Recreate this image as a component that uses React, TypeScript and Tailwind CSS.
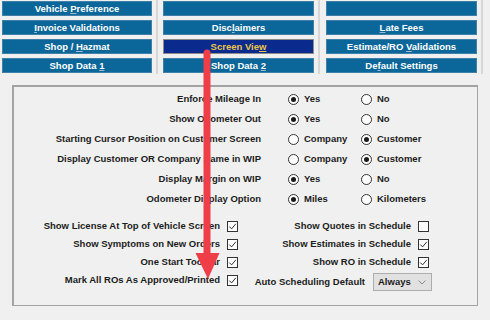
import type { ReactNode } from "react";

const U = ({ children, gold }: { children: ReactNode; gold?: boolean }) => (
  <span
    className={
      gold
        ? "underline decoration-[#e9c44a] underline-offset-[1px]"
        : "underline decoration-[#9dbdd6] underline-offset-[1px]"
    }
  >
    {children}
  </span>
);

function NavButton({ children, active }: { children?: ReactNode; active?: boolean }) {
  return (
    <div
      className={
        active
          ? "flex h-[15px] items-center justify-center border border-[#8c8c8c] bg-[#0a2a8e] text-[9.5px] font-bold leading-none text-[#e9c44a]"
          : "flex h-[15px] items-center justify-center border border-[#3f7fa8] bg-[#0b6699] text-[9.5px] font-bold leading-none text-white"
      }
    >
      <span className="whitespace-pre">{children}</span>
    </div>
  );
}

function Radio({ checked }: { checked?: boolean }) {
  return (
    <span className="flex h-[11px] w-[11px] items-center justify-center rounded-full border border-[#333] bg-white">
      {checked && <span className="h-[5px] w-[5px] rounded-full bg-[#1a1a1a]" />}
    </span>
  );
}

function Check({ checked }: { checked?: boolean }) {
  return (
    <span className="flex h-[11px] w-[11px] items-center justify-center border border-[#333] bg-white">
      {checked && (
        <svg width="9" height="9" viewBox="0 0 9 9">
          <path d="M1.3 4.6 L3.6 6.9 L7.8 1.8" fill="none" stroke="#333" strokeWidth="1" />
        </svg>
      )}
    </span>
  );
}

const radioRows: [string, string, string, number][] = [
  ["Enforce Mileage In", "Yes", "No", 0],
  ["Show Odometer Out", "Yes", "No", 0],
  ["Starting Cursor Position on Customer Screen", "Company", "Customer", 1],
  ["Display Customer OR Company Name in WIP", "Company", "Customer", 1],
  ["Display Margin on WIP", "Yes", "No", 0],
  ["Odometer Display Option", "Miles", "Kilometers", 0],
];

const leftChecks = [
  "Show License At Top of Vehicle Screen",
  "Show Symptoms on New Orders",
  "One Start Toolbar",
  "Mark All ROs As Approved/Printed",
];

const rightChecks: [string, boolean][] = [
  ["Show Quotes in Schedule", false],
  ["Show Estimates in Schedule", true],
  ["Show RO in Schedule", true],
];

export default function App() {
  return (
    <div
      className="relative h-[320px] w-[490px] overflow-hidden bg-[#f0f0f0] text-[#1c1c1c]"
      style={{ fontFamily: '"Liberation Sans", Arial, sans-serif' }}
    >
      {/* top nav buttons */}
      <div className="flex h-[74px] pl-[2px]">
        <div className="flex w-[150px] flex-col gap-[4px] pt-[1px]">
          <NavButton>
            {"Vehicle "}<U>P</U>reference
          </NavButton>
          <NavButton>
            <U>I</U>nvoice Validations
          </NavButton>
          <NavButton>
            {"Shop / "}<U>H</U>azmat
          </NavButton>
          <NavButton>
            {"Shop Data "}<U>1</U>
          </NavButton>
        </div>
        <div className="ml-[4px] mr-[5px] w-[2px] bg-[#d6d6d6]" />
        <div className="flex w-[151px] flex-col gap-[4px] pt-[1px]">
          <NavButton />
          <NavButton>
            Disc<U>l</U>aimers
          </NavButton>
          <NavButton active>
            Screen Vie<U gold>w</U>
          </NavButton>
          <NavButton>
            {"Shop Data "}<U>2</U>
          </NavButton>
        </div>
        <div className="ml-[4px] mr-[6px] w-[2px] bg-[#d6d6d6]" />
        <div className="flex w-[151px] flex-col gap-[4px] pt-[1px]">
          <NavButton />
          <NavButton>
            <U>L</U>ate Fees
          </NavButton>
          <NavButton>
            {"Estimate/RO "}<U>V</U>alidations
          </NavButton>
          <NavButton>
            De<U>f</U>ault Settings
          </NavButton>
        </div>
        <div className="ml-[4px] w-[2px] bg-[#d6d6d6]" />
      </div>

      {/* settings panel */}
      <div className="ml-[12px] mt-[11px] h-[221px] w-[466px] border-b border-l-2 border-r border-t-2 border-[#a3a3a3] pt-[2px] text-[9.5px] font-bold">
        {radioRows.map(([label, a, b, sel]) => (
          <div key={label} className="flex h-[20px] items-center">
            <div className="w-[247px] text-right">{label}</div>
            <div className="ml-[27px] flex w-[73px] items-center gap-[5px]">
              <Radio checked={sel === 0} />
              <span>{a}</span>
            </div>
            <div className="flex items-center gap-[5px]">
              <Radio checked={sel === 1} />
              <span>{b}</span>
            </div>
          </div>
        ))}

        <div className="mt-[8px] flex">
          <div className="flex w-[224px] flex-col items-end">
            {leftChecks.map((label) => (
              <div key={label} className="flex h-[18px] items-center gap-[7px]">
                <span>{label}</span>
                <Check checked />
              </div>
            ))}
          </div>
          <div className="ml-[12px] flex w-[182px] flex-col items-end">
            {rightChecks.map(([label, c]) => (
              <div key={label} className="mr-[3px] flex h-[18px] items-center gap-[7px]">
                <span>{label}</span>
                <Check checked={c} />
              </div>
            ))}
            <div className="flex h-[22px] items-center gap-[8px]">
              <span>Auto Scheduling Default</span>
              <div className="flex h-[18px] w-[59px] items-center justify-between border border-[#adadad] bg-[#e1e1e1] pl-[4px] pr-[5px]">
                <span>Always</span>
                <svg width="8" height="5" viewBox="0 0 8 5">
                  <path d="M0.5 0.5 L4 4 L7.5 0.5" fill="none" stroke="#888" strokeWidth="1" />
                </svg>
              </div>
            </div>
          </div>
        </div>
      </div>

      {/* red annotation arrow */}
      <svg className="pointer-events-none absolute left-0 top-0" width="490" height="320">
        <line x1="207" y1="53" x2="207" y2="256" stroke="#ef3e48" strokeWidth="7" strokeLinecap="round" />
        <polygon points="195.5,253 219.5,253 208,279" fill="#ef3e48" />
      </svg>
    </div>
  );
}
